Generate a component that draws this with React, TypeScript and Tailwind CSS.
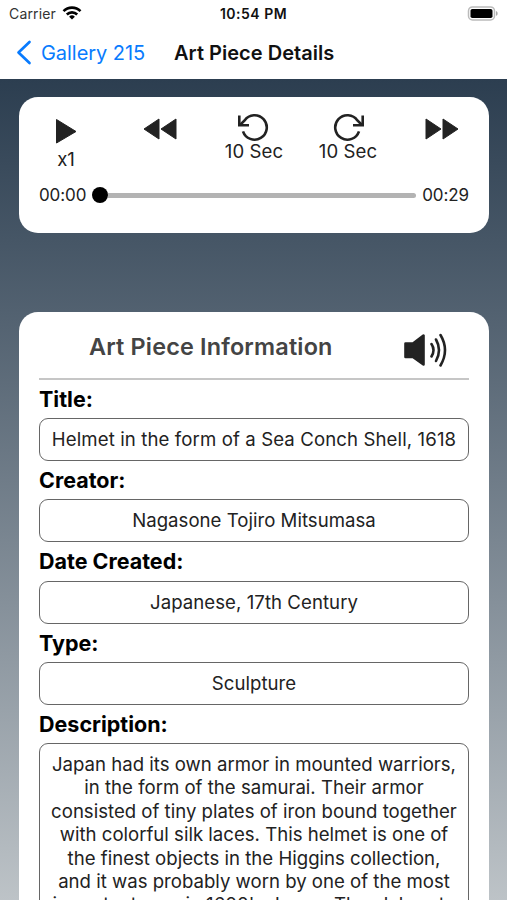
import React from "react";

const fields = [
  { label: "Title:", value: "Helmet in the form of a Sea Conch Shell, 1618", spacing: "tracking-[0.110px]" },
  { label: "Creator:", value: "Nagasone Tojiro Mitsumasa", spacing: "tracking-[0.020px]" },
  { label: "Date Created:", value: "Japanese, 17th Century", spacing: "tracking-[0.060px]" },
  { label: "Type:", value: "Sculpture", spacing: "tracking-[0.050px]" },
];

const description = [
  "Japan had its own armor in mounted warriors,",
  "in the form of the samurai. Their armor",
  "consisted of tiny plates of iron bound together",
  "with colorful silk laces. This helmet is one of",
  "the finest objects in the Higgins collection,",
  "and it was probably worn by one of the most",
  "important men in 1600's Japan. The elaborate",
];

function StatusBar() {
  return (
    <div className="grid h-[27px] grid-cols-3 items-center px-[9px] text-[14px]">
      <div className="flex items-center gap-[6px] text-[#333]">
        <span className="tracking-[0.150px]">Carrier</span>
        <svg className="-mt-[2px]" width="20" height="14" viewBox="0 0 20 14" fill="none" stroke="#000" strokeWidth="2.6">
          <path d="M1.5 5.2a12 12 0 0 1 17 0" />
          <path d="M4.8 8.5a7.4 7.4 0 0 1 10.4 0" />
          <path d="M10 13.6 7.1 10.7a4.1 4.1 0 0 1 5.8 0z" fill="#000" stroke="none" />
        </svg>
      </div>
      <span className="text-center font-semibold tracking-[0.500px] whitespace-nowrap text-[#111]">10:54 PM</span>
      <svg className="justify-self-end" width="31" height="15" viewBox="0 0 31 15">
        <rect x="1.500" y="0.900" width="26" height="13" rx="4" fill="#fff" stroke="#bbb" strokeWidth="1.500" />
        <rect x="3.500" y="3" width="22" height="9" rx="1.800" fill="#000" />
        <path d="M29 5C31.200 5.800 31.200 9 29 9.800Z" fill="#aaa" />
      </svg>
    </div>
  );
}

function Replay({ forward = false }: { forward?: boolean }) {
  return (
    <svg className={forward ? "" : "-scale-x-100"} width="32" height="28" viewBox="0 0 32 28" fill="none" stroke="#222" strokeWidth="2.600">
      <path d="M27 18.300A12.200 12.200 0 1 1 25.400 7.400L30 12" />
      <path d="M30.700 2.500V12.200H21" />
    </svg>
  );
}

function Player() {
  return (
    <section className="mr-[18px] ml-[19px] mt-[18px] h-[136px] rounded-[19px] bg-white text-[18.600px] leading-[24px] text-[#222]">
      <div className="grid h-[86px] grid-cols-5 justify-items-center pt-[16px]">
        <div className="flex flex-col items-center">
          <svg className="mt-[6px]" width="22" height="26" viewBox="0 0 22 26" fill="#222"><path d="M1.500 .500 21 12.500 1.500 24z" stroke="#222" strokeLinejoin="round" /></svg>
          <span className="mt-[2px]">x1</span>
        </div>
        <svg className="mt-[5px]" width="34" height="22" viewBox="0 0 34 22" fill="#222"><path d="M16 1V21L1 11zM33 1V21L18 11z" stroke="#222" strokeLinejoin="round" /></svg>
        <div className="flex flex-col items-center">
          <Replay />
          <span className="-mt-[2px] tracking-[0.100px]">10 Sec</span>
        </div>
        <div className="flex flex-col items-center">
          <Replay forward />
          <span className="-mt-[2px] tracking-[0.100px]">10 Sec</span>
        </div>
        <svg className="mt-[5px]" width="34" height="22" viewBox="0 0 34 22" fill="#222"><path d="M1 1V21L16 11zM18 1V21L33 11z" stroke="#222" strokeLinejoin="round" /></svg>
      </div>
      <div className="flex h-[24px] items-center px-[20px] text-[17px]">
        <span className="w-[53px] tracking-[-0.100px]">00:00</span>
        <span className="size-[16px] rounded-full bg-black" />
        <span className="h-[5px] grow rounded-r-full bg-[#b3b3b3]" />
        <span className="w-[53px] text-right tracking-[-0.100px]">00:29</span>
      </div>
    </section>
  );
}

export default function App() {
  return (
    <main className="flex h-[900px] w-[507px] flex-col overflow-hidden bg-white font-[Inter,sans-serif] text-black">
      <StatusBar />
      <header className="flex h-[52px] items-center pl-[16px] text-[20px]">
        <svg className="-mt-[2px]" width="16" height="25" viewBox="0 0 16 25" fill="none" stroke="#087bfe" strokeWidth="2.700" strokeLinecap="round" strokeLinejoin="round"><path d="M13.500 2 2.500 12.500 13.500 23" /></svg>
        <span className="-mt-[1px] ml-[9px] w-[133px] tracking-[-0.050px] whitespace-nowrap text-[#087bfe]">Gallery 215</span>
        <h1 className="-mt-[1px] font-semibold text-[#111] tracking-[0.030px] whitespace-nowrap">Art Piece Details</h1>
      </header>
      <div className="h-[821px] overflow-hidden bg-linear-to-b from-[#2c3e50] to-[#bdc3c7]">
        <Player />
        <section className="mr-[18px] ml-[19px] mt-[79px] rounded-t-[19px] bg-white px-[20px]">
          <div className="flex h-[68px] items-center border-b-2 border-[#c6c6c6]">
            <h2 className="mt-[4px] ml-[50px] w-[314px] text-[23.400px] font-semibold tracking-[0.180px] whitespace-nowrap text-[#444]">Art Piece Information</h2>
            <svg className="mt-[10px]" width="48" height="36" viewBox="0 0 48 36" fill="none" stroke="#222" strokeWidth="2.600" strokeLinecap="round">
              <path d="M2.500 11.500H10L20.500 3.500V32.500L10 25H2.500z" fill="#222" strokeLinejoin="round" />
              <path d="M28.500 12Q32.500 18 28.500 24.500M33 7.500Q39 18 33 29M37.500 3Q46.500 18 37.500 33.500" />
            </svg>
          </div>
          {fields.map((field) => (
            <div key={field.label}>
              <h3 className="h-[38.200px] text-[21.500px] leading-[39px] font-bold">{field.label}</h3>
              <div className={`flex h-[43px] items-center justify-center rounded-[9px] border border-[#666] pt-[1px] text-[18.600px] whitespace-nowrap text-[#222] ${field.spacing}`}>{field.value}</div>
            </div>
          ))}
          <h3 className="h-[38.200px] text-[21.500px] leading-[39px] font-bold">Description:</h3>
          <div className="rounded-[9px] border border-[#666] pt-[9px] text-center text-[18.600px] leading-[23.400px] text-[#222]">
            {description.map((line) => <p key={line} className="whitespace-nowrap">{line}</p>)}
          </div>
        </section>
      </div>
    </main>
  );
}
